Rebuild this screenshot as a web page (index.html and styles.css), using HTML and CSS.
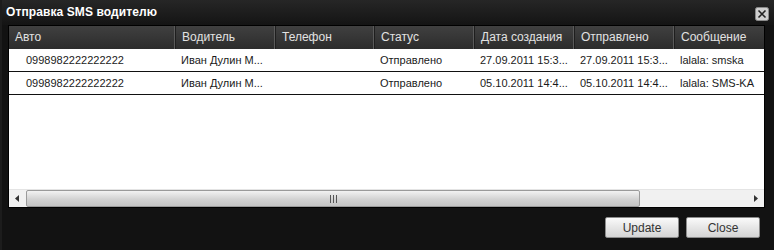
FILE: index.html
```html
<!DOCTYPE html>
<html>
    <head>
        <title>Отправка SMS водителю</title>
        <link rel="stylesheet" href="styles.css">
    </head>
    <body>
        <div class="window">
            <div class="titlebar">
                <span class="title">Отправка SMS водителю</span>
                <span class="close-x">
                    <svg width="14" height="14" viewBox="0 0 14 14">
                        <rect x="0.5" y="0.5" width="13" height="13" rx="2" fill="#cfcfcf" stroke="#8a8a8a"/>
                        <path d="M3.5 3.5 L10.5 10.5 M10.5 3.5 L3.5 10.5" stroke="#222" stroke-width="1.6"/>
                    </svg>
                </span>
            </div>

            <div class="grid">
                <div class="row head">
                    <div class="cell">Авто</div>
                    <div class="cell">Водитель</div>
                    <div class="cell">Телефон</div>
                    <div class="cell">Статус</div>
                    <div class="cell">Дата создания</div>
                    <div class="cell">Отправлено</div>
                    <div class="cell">Сообщение</div>
                </div>
                <div class="body">
                    <div class="row">
                        <div class="cell first">0998982222222222</div>
                        <div class="cell">Иван Дулин М...</div>
                        <div class="cell"></div>
                        <div class="cell">Отправлено</div>
                        <div class="cell">27.09.2011 15:3...</div>
                        <div class="cell">27.09.2011 15:3...</div>
                        <div class="cell">lalala: smska</div>
                    </div>
                    <div class="row">
                        <div class="cell first">0998982222222222</div>
                        <div class="cell">Иван Дулин М...</div>
                        <div class="cell"></div>
                        <div class="cell">Отправлено</div>
                        <div class="cell">05.10.2011 14:4...</div>
                        <div class="cell">05.10.2011 14:4...</div>
                        <div class="cell">lalala: SMS-KA</div>
                    </div>
                </div>
                <div class="hscroll">
                    <div class="arrow">
                        <svg width="5" height="7" viewBox="0 0 5 7"><path d="M4 0 L0 3.5 L4 7 Z" fill="#333"/></svg>
                    </div>
                    <div class="track">
                        <div class="thumb">
                            <svg width="7" height="8" viewBox="0 0 7 8">
                                <path d="M0.5 0 V8 M3.5 0 V8 M6.5 0 V8" stroke="#555" stroke-width="1"/>
                            </svg>
                        </div>
                    </div>
                    <div class="arrow">
                        <svg width="5" height="7" viewBox="0 0 5 7"><path d="M1 0 L5 3.5 L1 7 Z" fill="#333"/></svg>
                    </div>
                </div>
            </div>

            <div class="footer">
                <button class="btn">Update</button>
                <button class="btn">Close</button>
            </div>
        </div>
    </body>
</html>
```

FILE: styles.css
```css
body {
    margin:0;
    background-color:#111;
    font-family:"Liberation Sans", Arial, sans-serif;
}

.window {
    width:774px;
    height:250px;
    box-sizing:border-box;
    background-color:#121212;
    border-left:2px solid #1c1c1c;
}

.titlebar {
    height:25px;
    display:flex;
    align-items:center;
    justify-content:space-between;
    padding:0 5px 0 4px;
    background:linear-gradient(#262626, #141414);
}

.title {
    color:#fff;
    font-size:12px;
    font-weight:bold;
    letter-spacing:0.1px;
    margin-top:-1px;
}

.close-x {
    display:flex;
    margin-top:2px;
}

.grid {
    margin-left:6px;
    width:757px;
    height:183px;
    box-sizing:border-box;
    border:1px solid #000;
    background-color:#fff;
    display:flex;
    flex-direction:column;
}

.row {
    display:grid;
    grid-template-columns:165px 100px 99px 100px 100px 100px 91px;
    height:22px;
    border-bottom:1px solid #111;
    font-size:11px;
    color:#1a1a1a;
}

.cell {
    padding-left:7px;
    line-height:22px;
    white-space:nowrap;
    overflow:hidden;
}

.first {
    padding-left:17px;
}

.head {
    height:23px;
    border-bottom:none;
    background:linear-gradient(#404040, #2c2c2c);
    color:#e2e2e2;
    font-size:12px;
}

.head .cell {
    line-height:23px;
    border-left:1px solid #5a5a5a;
    box-shadow:inset 1px 0 0 #1e1e1e;
}

.head .cell:first-child {
    border-left:none;
    box-shadow:none;
    padding-left:6px;
}

.body {
    flex:1;
}

.hscroll {
    height:17px;
    display:flex;
    background-color:#f1f1f1;
    border-top:1px solid #e4e4e4;
}

.arrow {
    width:17px;
    display:flex;
    align-items:center;
    justify-content:center;
}

.track {
    flex:1;
    display:flex;
}

.thumb {
    width:614px;
    box-sizing:border-box;
    border:1px solid #9a9a9a;
    border-radius:2px;
    background:linear-gradient(#f2f2f2, #d2d2d2 55%, #c4c4c4);
    display:flex;
    align-items:center;
    justify-content:center;
}

.footer {
    display:flex;
    justify-content:flex-end;
    gap:7px;
    padding:9px 14px 0 0;
}

.btn {
    width:74px;
    height:21px;
    font-family:"Liberation Sans", Arial, sans-serif;
    font-size:12px;
    color:#333;
    border:1px solid #8c8c8c;
    border-radius:2px;
    background:linear-gradient(#fafafa, #e6e6e6 50%, #d4d4d4);
    cursor:pointer;
}
```
